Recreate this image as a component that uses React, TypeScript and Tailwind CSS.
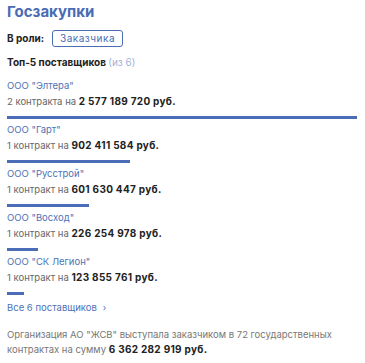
import React from 'react';

type Supplier = {
    name: string;
    contracts: string;
    amount: number;
};

const suppliers: Supplier[] = [
    { name: 'ООО "Элтера"', contracts: '2 контракта', amount: 2577189720 },
    { name: 'ООО "Гарт"', contracts: '1 контракт', amount: 902411584 },
    { name: 'ООО "Русстрой"', contracts: '1 контракт', amount: 601630447 },
    { name: 'ООО "Восход"', contracts: '1 контракт', amount: 226254978 },
    { name: 'ООО "СК Легион"', contracts: '1 контракт', amount: 123855761 },
];

const formatRub = (n: number) => n.toString().replace(/\B(?=(\d{3})+(?!\d))/g, ' ');

const MAX = suppliers[0].amount;

export default function App() {
    return (
        <div className="w-[365px] h-[363px] bg-white pl-[7px] pr-[8px] pt-[3px] font-['Inter','Noto_Sans',sans-serif] text-[#333]">
            <h2 className="text-[15px] leading-[18px] font-bold text-[#4a6cb4]">Госзакупки</h2>

            <div className="flex items-center gap-[8px] mt-[9px]">
                <span className="text-[10px] font-bold text-[#222]">В роли:</span>
                <span className="h-[17px] flex items-center px-[7px] border border-[#4a6cb4] rounded-[3px] text-[10px] text-[#4a6cb4] tracking-[0.5px]">Заказчика</span>
            </div>

            <div className="mt-[8px] text-[10px] leading-[14px] font-bold text-[#222]">
                Топ-5 поставщиков <span className="font-normal text-[#9fb3d9]">(из 6)</span>
            </div>

            <div className="mt-[9px] flex flex-col gap-[3px]">
                {suppliers.map(s => (
                    <div key={s.name}>
                        <div className="text-[9.5px] leading-[15px] text-[#4d72b8]">{s.name}</div>
                        <div className="text-[9.5px] leading-[16px] text-[#666]">
                            {s.contracts} на <span className="text-[10px] font-bold text-[#222] tracking-[0.3px]">{formatRub(s.amount)} руб.</span>
                        </div>
                        <div className="mt-[6px] h-[3px] bg-[#4b6cb7]" style={{ width: `${(s.amount / MAX) * 350}px` }} />
                    </div>
                ))}
            </div>

            <div className="mt-[6px] flex items-center gap-[6px] text-[9.5px] leading-[14px] text-[#4d72b8]">
                Все 6 поставщиков <span className="text-[9px]">›</span>
            </div>

            <p className="mt-[12px] text-[9.5px] leading-[15px] text-[#777]">
                Организация АО "ЖСВ" выступала заказчиком в 72 государственных контрактах на сумму <span className="text-[10px] font-bold text-[#222] tracking-[0.3px]">6 362 282 919 руб.</span>
            </p>
        </div>
    );
}
